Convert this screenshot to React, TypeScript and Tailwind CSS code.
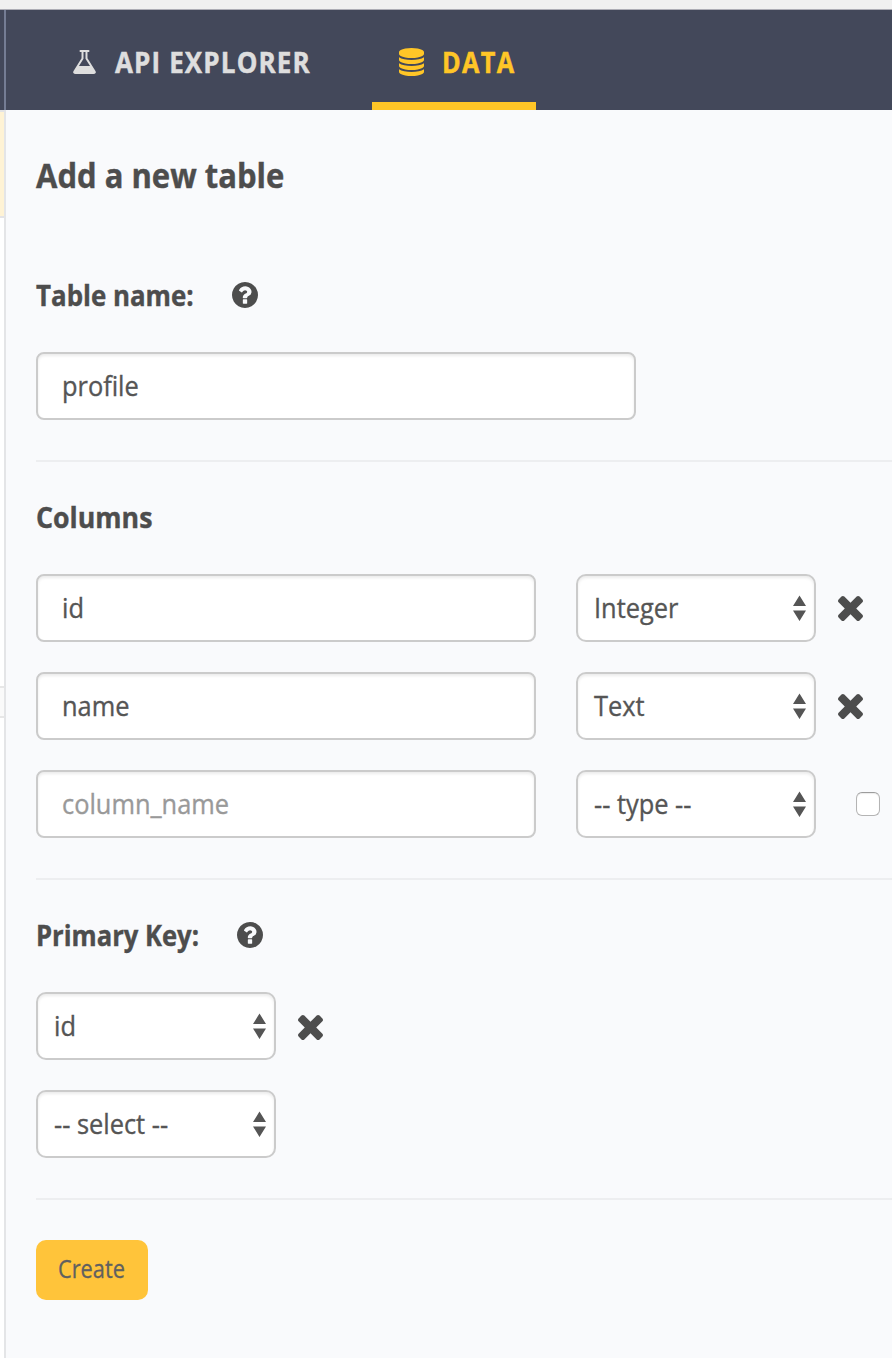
import React from "react";

const FONT = "font-['Open_Sans','Noto_Sans',sans-serif]";

function FlaskIcon() {
  return (
    <svg className="-ml-px h-6 w-[23px] shrink-0 fill-current" viewBox="155 128 1482 1536" preserveAspectRatio="none">
      <path d="M1591 1448q56 89 21.5 152.5t-140.5 63.5h-1152q-106 0-140.5-63.5t21.5-152.5l503-793v-399h-64q-26 0-45-19t-19-45 19-45 45-19h512q26 0 45 19t19 45-19 45-45 19h-64v399zm-779-725l-272 429h712l-272-429-20-31v-436h-128v436z" />
    </svg>
  );
}

function DatabaseIcon() {
  return (
    <svg className="h-7 w-[25px] shrink-0 fill-current" viewBox="128 0 1536 1792" preserveAspectRatio="none">
      <path d="M896 768q237 0 443-43t325-127v170q0 69-103 128t-280 93.5-385 34.5-385-34.5-280-93.5-103-128v-170q119 84 325 127t443 43zm0 768q237 0 443-43t325-127v170q0 69-103 128t-280 93.5-385 34.5-385-34.5-280-93.5-103-128v-170q119 84 325 127t443 43zm0-384q237 0 443-43t325-127v170q0 69-103 128t-280 93.5-385 34.5-385-34.5-280-93.5-103-128v-170q119 84 325 127t443 43zm0-1152q208 0 385 34.5t280 93.5 103 128v128q0 69-103 128t-280 93.5-385 34.5-385-34.5-280-93.5-103-128v-128q0-69 103-128t280-93.5 385-34.5z" />
    </svg>
  );
}

function HelpIcon() {
  return (
    <svg className="size-[26px] shrink-0 fill-current" viewBox="128 128 1536 1536">
      <path d="M1024 1376v-192q0-14-9-23t-23-9h-192q-14 0-23 9t-9 23v192q0 14 9 23t23 9h192q14 0 23-9t9-23zm256-672q0-88-55.5-163t-138.5-116-170-41q-243 0-371 213-15 24 8 42l132 100q7 6 19 6 16 0 25-12 53-68 86-92 34-24 86-24 48 0 85.5 26t37.5 59q0 38-20 61t-68 45q-63 28-115.5 86.5t-52.5 125.5v36q0 14 9 23t23 9h192q14 0 23-9t9-23q0-19 21.5-49.5t54.5-49.5q32-18 49-28.5t46-35 44.5-48 28-60.5 12.5-81zm384 192q0 209-103 385.5t-279.5 279.5-385.5 103-385.5-103-279.5-279.5-103-385.5 103-385.5 279.5-279.5 385.5-103 385.5 103 279.5 279.5 103 385.5z" />
    </svg>
  );
}

function RemoveIcon({ className = "" }: { className?: string }) {
  return (
    <svg className={`ml-[22px] size-[25px] shrink-0 fill-current ${className}`} viewBox="302 366 1188 1188">
      <path d="M1490 1322q0 40-28 68l-136 136q-28 28-68 28t-68-28l-294-294-294 294q-28 28-68 28t-68-28l-136-136q-28-28-28-68t28-68l294-294-294-294q-28-28-28-68t28-68l136-136q28-28 68-28t68 28l294 294 294-294q28-28 68-28t68 28l136 136q28 28 28 68t-28 68l-294 294 294 294q28 28 28 68z" />
    </svg>
  );
}

const BOX =
  "flex h-[68px] shrink-0 items-center border-2 border-[#cbcbcb] bg-white text-[27px] shadow-[inset_0_2px_3px_rgba(0,0,0,0.08)]";

function Field({ width, children, muted }: { width: string; children: string; muted?: boolean }) {
  return (
    <div className={`${BOX} rounded-lg pl-6 ${width} ${muted ? "text-[#999]" : "text-[#555]"}`}>
      <Text>{children}</Text>
    </div>
  );
}

function Text({ children }: { children: string }) {
  return (
    <span className="inline-block origin-left scale-x-[0.94] whitespace-nowrap [-webkit-text-stroke:0.35px_currentColor]">
      {children}
    </span>
  );
}

function Select({ children }: { children: string }) {
  return (
    <div className={`${BOX} w-60 justify-between rounded-[10px] pr-2 pl-4 text-[#555]`}>
      <Text>{children}</Text>
      <svg className="mb-px h-[26px] w-[13px] fill-current" viewBox="0 0 13 26">
        <path d="M6.5 0.5 13 11H0zM0 15.5h13L6.5 26z" />
      </svg>
    </div>
  );
}

function Label({ children, help, width, scale }: { children: string; help?: boolean; width: string; scale: string }) {
  return (
    <div className="flex h-10 items-center pb-0.5">
      <div className={`${width} shrink-0 text-[29px] font-bold`}>
        <span className={`inline-block origin-left whitespace-nowrap [-webkit-text-stroke:0.4px_currentColor] ${scale}`}>
          {children}
        </span>
      </div>
      {help && <HelpIcon />}
    </div>
  );
}

export default function App() {
  return (
    <div className={`flex h-[1358px] w-[892px] flex-col overflow-hidden bg-[#f9fafc] text-[#4d4d4d] ${FONT}`}>
      <div className="h-[10px] shrink-0 border-b border-[#adadb5] bg-[#f0f0f0]" />
      <header className="flex h-[100px] shrink-0 bg-[#43485a] text-[28px] font-bold">
        <div className="w-1.5 border-r-2 border-[#757d94]" />
        <nav className="flex">
          <div className="flex w-[366px] items-center pl-[68px] pt-1 text-[#dedede]">
            <FlaskIcon />
            <span className="mb-px ml-[19px] inline-block origin-left scale-x-[0.93] whitespace-nowrap tracking-[1.2px] [-webkit-text-stroke:0.5px_currentColor]">
              API EXPLORER
            </span>
          </div>
          <div className="flex w-[164px] items-center border-b-8 border-[#ffc627] pt-3 pl-[27px] text-[#ffc627]">
            <DatabaseIcon />
            <span className="mb-px ml-[18px] inline-block origin-left scale-x-[0.9] whitespace-nowrap tracking-[1.5px] [-webkit-text-stroke:0.5px_currentColor]">
              DATA
            </span>
          </div>
        </nav>
      </header>
      <div className="flex flex-1">
        <aside className="flex w-1.5 flex-col border-r-2 border-[#e4e5e7] bg-white">
          <div className="h-[108px] border-y-2 border-[#e4e4e6] bg-[#fff3d5]" />
          <div className="mt-[468px] h-8 border-y-2 border-[#e7e7e7] bg-[#fafafa]" />
        </aside>
        <main className="flex-1 pl-[30px]">
          <h1 className="mt-10 flex h-[50px] items-center text-[34px] font-bold">
            <span className="inline-block origin-left scale-x-[0.912] whitespace-nowrap [-webkit-text-stroke:0.4px_currentColor]">
              Add a new table
            </span>
          </h1>
          <section className="mt-[76px] border-b-2 border-[#edeef0] pb-10">
            <Label width="w-[196px]" scale="scale-x-[0.893]" help>Table name:</Label>
            <div className="mt-9">
              <Field width="w-[600px]">profile</Field>
            </div>
          </section>
          <section className="border-b-2 border-[#edeef0] pt-9 pb-10">
            <Label width="w-[196px]" scale="scale-x-[0.922]">Columns</Label>
            <div className="mt-9 flex flex-col gap-[30px]">
              <div className="flex items-center">
                <Field width="w-[500px]">id</Field>
                <div className="w-10 shrink-0" />
                <Select>Integer</Select>
                <RemoveIcon />
              </div>
              <div className="flex items-center">
                <Field width="w-[500px]">name</Field>
                <div className="w-10 shrink-0" />
                <Select>Text</Select>
                <RemoveIcon />
              </div>
              <div className="flex items-center">
                <Field width="w-[500px]" muted>column_name</Field>
                <div className="w-10 shrink-0" />
                <Select>-- type --</Select>
                <div className="ml-10 size-6 shrink-0 rounded-md border border-[#b4b4b4] border-t-[#9c9c9c] bg-white shadow-[inset_0_1px_1px_rgba(0,0,0,0.08)]" />
              </div>
            </div>
          </section>
          <section className="border-b-2 border-[#edeef0] pt-9 pb-10">
            <Label width="w-[201px]" scale="scale-x-[0.883]" help>Primary Key:</Label>
            <div className="mt-9 flex flex-col gap-[30px]">
              <div className="flex items-center">
                <Select>id</Select>
                <RemoveIcon className="mt-[3px]" />
              </div>
              <Select>-- select --</Select>
            </div>
          </section>
          <button className="mt-10 flex h-[60px] w-28 items-center rounded-[10px] bg-[#ffc43a] pb-0.5 pl-[22px] text-[25px] text-[#606060]">
            <span className="inline-block origin-left scale-x-[0.87] whitespace-nowrap [-webkit-text-stroke:0.3px_currentColor]">
              Create
            </span>
          </button>
        </main>
      </div>
    </div>
  );
}
